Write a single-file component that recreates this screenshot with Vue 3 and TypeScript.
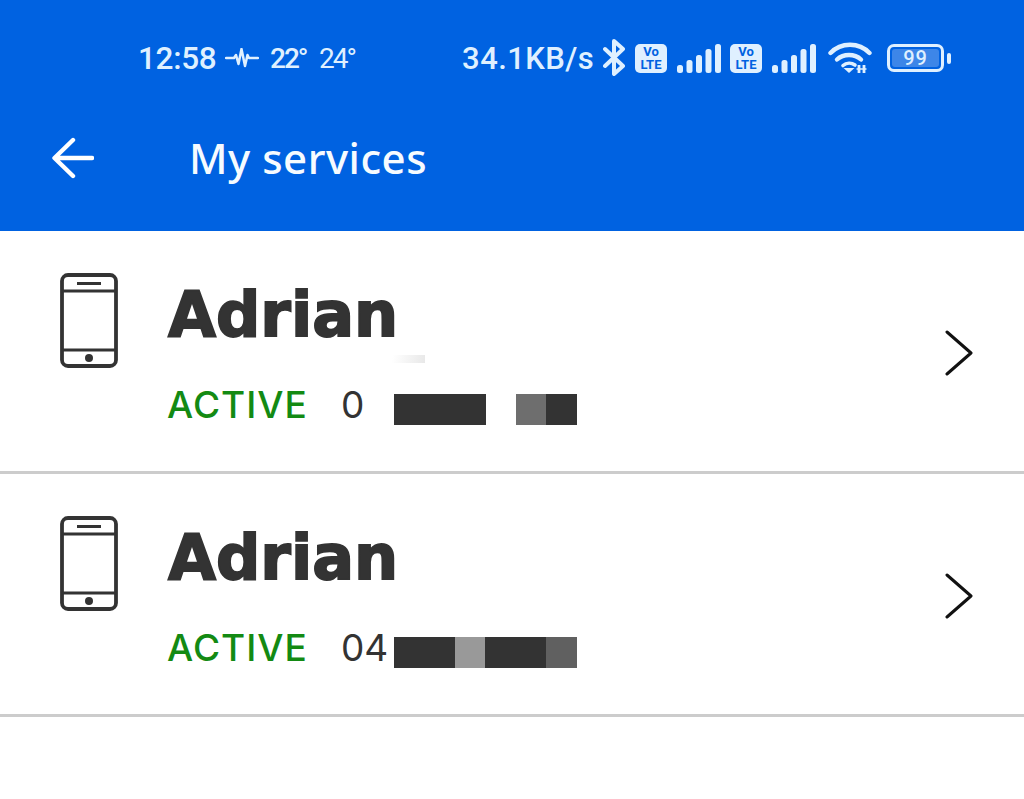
<template>
  <div class="page">
    <header class="header">
      <div class="status">
        <span class="clock">12:58</span>
        <svg class="pulse" width="34" height="20" viewBox="0 0 34 20" fill="none">
          <path d="M1 10h8l2-3 2.500 9 3-15 3.500 17 2.500-11 1.500 3h9" stroke="currentColor" stroke-width="2.500" stroke-linejoin="round" stroke-linecap="round" />
        </svg>
        <span class="temp">22°</span>
        <span class="temp thin">24°</span>

        <div class="status-right">
          <span class="speed">34.1KB/s</span>
          <svg class="bt" width="22" height="37" viewBox="0 0 22 37" fill="none">
            <path d="M2 10l18 17-9 8V2l9 8L2 27" stroke="currentColor" stroke-width="4" stroke-linejoin="round" stroke-linecap="round" />
          </svg>
          <template v-for="n in 2" :key="n">
            <div class="volte"><span>Vo</span><span>LTE</span></div>
            <svg class="signal" width="44" height="29" viewBox="0 0 44 29">
              <rect v-for="b in bars" :key="b.x" :x="b.x" :y="b.y" width="6" :height="29 - b.y" rx="2.500" fill="currentColor" />
            </svg>
          </template>
          <svg class="wifi" width="44" height="31" viewBox="0 0 44 31" fill="none">
            <path d="M2.500 11C13 0 31 0 41.500 11" stroke="currentColor" stroke-width="4.400" stroke-linecap="round" />
            <path d="M9 17.500C15.500 11.500 26.500 11.500 33 17.500" stroke="currentColor" stroke-width="4.400" stroke-linecap="round" />
            <path d="M15 23.500C18.500 20.500 23.500 20.500 27 23" stroke="currentColor" stroke-width="3.600" stroke-linecap="round" />
            <path d="M15.500 26h11l-5.500 5z" fill="currentColor" />
            <path d="M31 23v8M36 23v8" stroke="currentColor" stroke-width="2.800" />
            <path d="M28.500 27h10" stroke="currentColor" stroke-width="1.500" />
          </svg>
          <div class="battery">
            <div class="battery-body"><span class="battery-level">99</span></div>
            <i class="battery-tip"></i>
          </div>
        </div>
      </div>

      <div class="toolbar">
        <svg class="back" width="42" height="42" viewBox="0 0 42 42" fill="none">
          <path d="M40 21H3M21 3L2.500 21 21 39" stroke="currentColor" stroke-width="4.400" stroke-linecap="round" stroke-linejoin="round" />
        </svg>
        <h1 class="title">My services</h1>
      </div>
    </header>

    <ul class="services">
      <li v-for="s in services" :key="s.id" class="service">
        <svg class="phone" width="58" height="95" viewBox="0 0 58 95" fill="none">
          <rect x="2" y="2" width="54" height="91" rx="6" stroke="#333" stroke-width="3.800" />
          <path d="M2 18h54M2 77h54" stroke="#333" stroke-width="3" />
          <path d="M17 10.500h24" stroke="#333" stroke-width="3" />
          <circle cx="29" cy="85" r="4" fill="#333" />
        </svg>
        <div class="info">
          <div class="name">
            Adrian
            <i v-if="s.smudge" class="smudge"></i>
          </div>
          <div class="meta">
            <span class="state">ACTIVE</span>
            <span class="number">{{ s.prefix }}</span>
            <div class="mask">
              <i
                v-for="(b, i) in s.blocks"
                :key="i"
                class="block"
                :style="{ width: b.w + 'px', background: b.c }"
              ></i>
            </div>
          </div>
        </div>
        <svg class="chevron" width="28" height="46" viewBox="0 0 28 46" fill="none">
          <path d="M2 2l24 21L2 44" stroke="#111" stroke-width="3" stroke-linecap="round" stroke-linejoin="round" />
        </svg>
      </li>
    </ul>
  </div>
</template>

<script setup lang="ts">
interface Block {
  w: number
  c: string
}

interface Service {
  id: number
  prefix: string
  smudge: boolean
  blocks: Block[]
}

const bars = [
  { x: 0, y: 21 },
  { x: 9.500, y: 16 },
  { x: 19, y: 11 },
  { x: 28.500, y: 5 },
  { x: 38, y: 0 },
]

const services: Service[] = [
  {
    id: 1,
    prefix: '0',
    smudge: true,
    blocks: [
      { w: 92, c: '#333' },
      { w: 30, c: 'transparent' },
      { w: 30, c: '#6e6e6e' },
      { w: 31, c: '#333' },
    ],
  },
  {
    id: 2,
    prefix: '04',
    smudge: false,
    blocks: [
      { w: 61, c: '#333' },
      { w: 30, c: '#999' },
      { w: 61, c: '#333' },
      { w: 31, c: '#606060' },
    ],
  },
]
</script>

<style>
html, body { background: #fff; }
</style>

<style scoped>
.page { width: 1024px; height: 799px; overflow: hidden; background: #fff; font-family: Roboto, sans-serif; }

.header { height: 231px; background: #0062e1; color: #fff; }
.status {
  height: 116px; padding: 0 73px 0 138px; box-sizing: border-box;
  display: flex; align-items: center; color: #dff0ff;
}
.clock { font-size: 31.500px; font-weight: 500; width: 79px; letter-spacing: -0.300px; white-space: nowrap; }
.pulse { margin-left: 8px; }
.temp { font-size: 28px; font-weight: 500; letter-spacing: -2px; margin-left: 11px; width: 38px; }
.temp.thin { font-weight: 400; margin-left: 11px; }
.status-right { margin-left: auto; display: flex; align-items: center; }
.speed { font-size: 31px; font-weight: 500; letter-spacing: 0.400px; margin-right: 9px; white-space: nowrap; }
.bt { margin-right: 10px; margin-top: -2px; }
.volte {
  width: 32px; height: 29px; border-radius: 5px; background: #dff0ff; color: #0062e1;
  display: flex; flex-direction: column; align-items: center; justify-content: center;
  font-size: 13px; font-weight: 700; line-height: 13px; margin-right: 10px;
}
.signal { margin-right: 9px; }
.wifi { margin-left: 3px; margin-right: 15px; margin-top: -1px; }
.battery { display: flex; align-items: center; gap: 3px; }
.battery-body {
  width: 57px; height: 28px; box-sizing: border-box; border: 3px solid #dff0ff; border-radius: 7px;
  padding: 2px; display: flex;
}
.battery-level {
  flex: 1; background: #3d86e8; border-radius: 3px; text-align: center;
  font-size: 20px; line-height: 18px; font-weight: 500; letter-spacing: 1px;
}
.battery-tip { width: 4px; height: 11px; border-radius: 2px; background: #dff0ff; }

.toolbar { height: 84px; display: flex; align-items: center; padding-left: 52px; }
.back { flex: none; }
.title { margin: 0 0 0 95px; font: 500 42px/1 "Noto Sans", sans-serif; letter-spacing: 0.500px; color: #f6fbff; white-space: nowrap; }

.services { list-style: none; margin: 0; padding: 0; }
.service {
  height: 243px; box-sizing: border-box; border-bottom: 3px solid #ccc;
  display: flex; align-items: flex-start; padding: 42px 51px 0 60px; position: relative;
}
.phone { flex: none; }
.info { margin-left: 50px; flex: 1; }
.name {
  position: relative; font: 700 62px/76px "DejaVu Sans", sans-serif; color: #333;
  -webkit-text-stroke: 1.800px #333;
  margin-top: 4px; width: 258px;
}
.smudge {
  position: absolute; left: 221px; top: 78px; width: 36px; height: 8px;
  background: linear-gradient(100deg, #fff 10%, #e8e8e8);
}
.meta { display: flex; align-items: center; margin-top: 32px; height: 40px; }
.state { font: 500 37px/40px Inter, sans-serif; letter-spacing: 1px; color: #138a13; width: 174px; margin-left: -1px; white-space: nowrap; }
.number { font: 400 37px/40px Inter, sans-serif; color: #333; width: 53px; white-space: nowrap; }
.mask { display: flex; height: 31px; margin-top: 9px; }
.block { display: block; height: 100%; }
.chevron { flex: none; align-self: center; margin-top: -39px; }
</style>
